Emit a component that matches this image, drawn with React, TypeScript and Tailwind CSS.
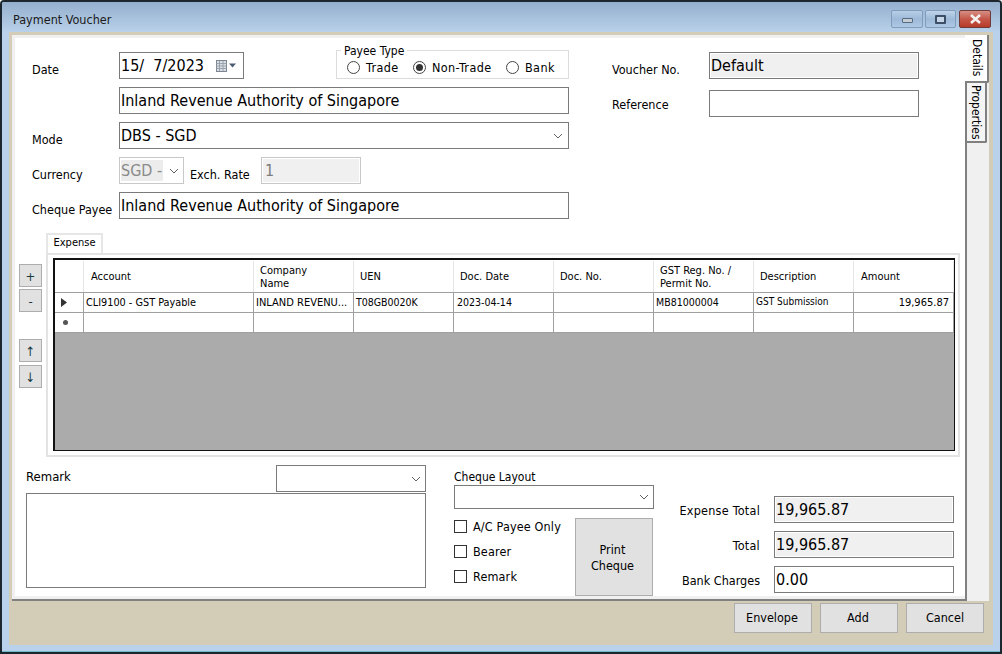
import React from "react";

const Chevron = () => (
  <svg width="10" height="6" viewBox="0 0 10 6" className="shrink-0">
    <path d="M1 1l4 4 4-4" fill="none" stroke="#606060" strokeWidth="1" />
  </svg>
);

const TextBox = ({ value = "", w, muted = false, grey = false }: { value?: string; w: string; muted?: boolean; grey?: boolean }) => (
  <div className={`${w} h-[27px] flex items-center pl-[1px] text-[16px] leading-none border border-[#7a7a7a] ${grey ? "bg-[#f0f0f0] shadow-[inset_0_0_0_1px_#fff]" : "bg-white"} ${muted ? "text-[#6d6d6d]" : "text-black"}`}>
    {value}
  </div>
);

const Radio = ({ label, w, on = false }: { label: string; w: string; on?: boolean }) => (
  <div className={`${w} flex items-center`}>
    <span className="w-[13px] h-[13px] rounded-full border border-[#444] bg-white flex items-center justify-center">
      {on && <span className="w-[7px] h-[7px] rounded-full bg-[#333]" />}
    </span>
    <span className="ml-[6px] pt-[2px] text-[12.500px] leading-none tracking-[0.4px] whitespace-nowrap">{label}</span>
  </div>
);

const Check = ({ label, mt }: { label: string; mt: string }) => (
  <div className={`${mt} flex items-center h-[13px]`}>
    <span className="w-[13px] h-[13px] border border-[#333] bg-white" />
    <span className="ml-[6px] pt-[2px] text-[12.500px] leading-none tracking-[0.15px]">{label}</span>
  </div>
);

const SideBtn = ({ t, mt }: { t: string; mt: string }) => (
  <div className={`${mt} w-[23px] h-[23px] pt-[1px] bg-[#e1e1e1] border border-[#adadad] flex items-center justify-center text-[13px] leading-none text-[#17383e]`}>{t}</div>
);

const FootBtn = ({ t, nudge }: { t: string; nudge: string }) => (
  <div className={`w-[78px] h-[30px] bg-[#e1e1e1] border border-[#adadad] flex items-center justify-center text-[12.500px] ${nudge}`}>{t}</div>
);

const headers: [string, string][] = [
  ["Account", "w-[170px] pl-[7px]"],
  ["Company\nName", "w-[100px] pl-[6px]"],
  ["UEN", "w-[100px] pl-[6px]"],
  ["Doc. Date", "w-[100px] pl-[6px]"],
  ["Doc. No.", "w-[100px] pl-[6px]"],
  ["GST Reg. No. /\nPermit No.", "w-[100px] pl-[6px]"],
  ["Description", "w-[100px] pl-[6px]"],
  ["Amount", "w-[100px] pl-[7px]"],
];

const cells: [string, string][] = [
  ["CLI9100 - GST Payable", "w-[170px] pl-[2px] pb-[1px] text-[10.800px]"],
  ["INLAND REVENU...", "w-[100px] pl-[2px] text-[11px]"],
  ["T08GB0020K", "w-[100px] pl-[2px] text-[10.500px]"],
  ["2023-04-14", "w-[100px] pl-[3px] text-[10.500px]"],
  ["", "w-[100px]"],
  ["MB81000004", "w-[100px] pl-[2px] text-[10.500px]"],
  ["GST Submission", "w-[100px] pl-[2px] pb-[2px] text-[10px]"],
  ["19,965.87", "w-[100px] pr-[4px] justify-end pb-[1px] text-[11px]"],
];

export default function App() {
  return (
    <div className="w-[1002px] h-[654px] flex flex-col border-2 border-[#1c262e] rounded-t-[4px] bg-[#b9d1ea] shadow-[inset_0_-1px_0_#6fb8c8] overflow-hidden text-black font-['DejaVu_Sans_Condensed','DejaVu_Sans',sans-serif] [font-stretch:condensed] text-[12.500px]">
      {/* title bar */}
      <div className="h-[30px] shrink-0 flex items-start justify-between pl-[11px] pr-[9px] bg-gradient-to-b from-[#94afcd] to-[#b9d1ea]">
        <span className="mt-[11px] text-[12.500px] leading-[14px] text-[#1a1a1a]">Payment Voucher</span>
        <div className="flex mt-[8px] gap-[2px]">
          <div className="w-[32px] h-[18px] rounded-[2px] border border-[#7f9cbc] bg-gradient-to-b from-[#b8cee6] via-[#9db9d8] to-[#aec8e4] flex items-center justify-center">
            <span className="w-[11px] h-[5px] mt-[3px] bg-[#c6ccd4] border border-[#566b82] rounded-[1px]" />
          </div>
          <div className="w-[31px] h-[18px] rounded-[2px] border border-[#7f9cbc] bg-gradient-to-b from-[#c0d4ea] via-[#9db9d8] to-[#aec8e4] flex items-center justify-center">
            <span className="w-[11px] h-[9px] bg-[#c6d6e8] border-2 border-[#3d4f66] rounded-[1px]" />
          </div>
          <div className="ml-[1px] w-[32px] h-[18px] rounded-[2px] border border-[#6e3a3a] bg-gradient-to-b from-[#d78f85] via-[#c4574a] to-[#b83a28] flex items-center justify-center">
            <svg width="13" height="10" viewBox="0 0 13 10">
              <path d="M2 1l9 8M11 1L2 9" stroke="#f4f0f0" strokeWidth="2.6" />
            </svg>
          </div>
        </div>
      </div>

      {/* client area */}
      <div className="w-[984px] h-[613px] ml-[7px] bg-[#d3cdb7] flex flex-col pl-[3px] pt-[3px] pr-[4px]">
        <div className="h-[566px] flex shrink-0">
          {/* main panel */}
          <div className="w-[953px] h-[566px] bg-white border-b-2 border-[#808080]">
            <div className="h-[564px] border-l-[3px] border-t-[3px] border-b-[3px] border-[#f0f0f0] flex flex-col">
              {/* top form */}
              <div className="h-[195px] flex pl-[17px] pt-[12px] shrink-0">
                <div className="w-[537px]">
                  <div className="flex h-[29px]">
                    <span className="w-[87px] pt-[12px] leading-[16px]">Date</span>
                    <div className="mt-[2px] w-[125px] h-[27px] border border-[#7a7a7a] flex items-center justify-between pl-[1px] pr-[5px] text-[16px] leading-none whitespace-pre">
                      <span>15/  7/2023</span>
                      <svg width="22" height="12" viewBox="0 0 22 12" className="shrink-0">
                        <rect x="0.5" y="0.5" width="10" height="11" fill="#d9dde2" stroke="#7d8794" />
                        <path d="M0 3.500h11M0 6h11M0 8.500h11M3.500 1v10M7 1v10" stroke="#8f99a5" strokeWidth="0.8" />
                        <path d="M13 3.500h7l-3.500 4z" fill="#4b5a70" />
                      </svg>
                    </div>
                    <div className="ml-[92px] relative w-[233px] h-[29px] border border-[#dcdcdc] flex items-center pt-[5px] pl-[10px]">
                      <span className="absolute left-[4px] -top-[7px] bg-white px-[3px] text-[12px] leading-[14px]">Payee Type</span>
                      <Radio label="Trade" w="w-[66px]" />
                      <Radio label="Non-Trade" w="w-[93px]" on />
                      <Radio label="Bank" w="w-[50px]" />
                    </div>
                  </div>
                  <div className="flex mt-[8px] ml-[87px]">
                    <TextBox w="w-[450px]" value="Inland Revenue Authority of Singapore" />
                  </div>
                  <div className="flex mt-[8px] h-[27px]">
                    <span className="w-[87px] pt-[10px] leading-[16px]">Mode</span>
                    <div className="w-[450px] h-[27px] border border-[#7a7a7a] flex items-center justify-between pl-[1px] pr-[5px] text-[16px] leading-none">
                      <span>DBS - SGD</span>
                      <Chevron />
                    </div>
                  </div>
                  <div className="flex mt-[8px] h-[27px]">
                    <span className="w-[87px] pt-[10px] leading-[16px]">Currency</span>
                    <div className="w-[65px] h-[27px] border border-[#c8c8c8] flex items-center justify-between pl-[1px] pr-[4px] text-[16px] leading-none text-[#8a8a8a]">
                      <span className="bg-[#ececec] h-[21px] flex items-center pr-[1px]">SGD -</span>
                      <Chevron />
                    </div>
                    <span className="ml-[6px] w-[71px] pt-[10px] leading-[16px]">Exch. Rate</span>
                    <div className="w-[100px] h-[27px] border border-[#c8c8c8] bg-[#f0f0f0] shadow-[inset_0_0_0_1px_#fff] flex items-center pl-[3px] text-[16px] leading-none text-[#7d7d7d]">1</div>
                  </div>
                  <div className="flex mt-[8px] h-[27px]">
                    <span className="w-[87px] pt-[10px] leading-[16px] whitespace-nowrap">Cheque Payee</span>
                    <TextBox w="w-[450px]" value="Inland Revenue Authority of Singapore" />
                  </div>
                </div>
                <div className="ml-[43px] pt-[2px]">
                  <div className="flex">
                    <span className="w-[97px] pt-[10px] leading-[16px]">Voucher No.</span>
                    <TextBox w="w-[210px]" value="Default" grey />
                  </div>
                  <div className="flex mt-[11px]">
                    <span className="w-[97px] pt-[7px] leading-[16px]">Reference</span>
                    <TextBox w="w-[210px]" />
                  </div>
                </div>
              </div>

              {/* grid section */}
              <div className="flex pl-[4px] shrink-0">
                <div className="w-[23px] pt-[31px]">
                  <SideBtn t="+" mt="" />
                  <SideBtn t="-" mt="mt-[2px]" />
                  <SideBtn t="↑" mt="mt-[27px]" />
                  <SideBtn t="↓" mt="mt-[3px]" />
                </div>
                <div className="ml-[4px] w-[914px]">
                  <div className="w-[57px] h-[21px] pb-[2px] border-2 border-b-0 border-[#e6e6e6] flex items-center justify-center text-[11px]">Expense</div>
                  <div className="w-[914px] h-[204px] -mt-px border-2 border-[#e3e3e3] pl-[5px] pt-[3px]">
                    <div className="w-[902px] h-[193px] border-t-2 border-l-2 border-r border-b border-[#111] bg-[#ababab] text-[11px] leading-[13px]">
                      <div className="flex h-[33px] pt-[1px] bg-white border-b border-[#a0a0a0]">
                        <div className="w-[29px] border-r border-[#e6e6e6]" />
                        {headers.map(([t, c]) => (
                          <div key={t} className={`${c} flex items-center whitespace-pre-line border-r border-[#e6e6e6]`}>{t}</div>
                        ))}
                      </div>
                      <div className="flex h-[20px] bg-white border-b border-[#a0a0a0]">
                        <div className="w-[29px] border-r border-[#a0a0a0] flex items-center pl-[6px]">
                          <svg width="6" height="9" viewBox="0 0 6 9"><path d="M0 0l6 4.500-6 4.500z" fill="#333" /></svg>
                        </div>
                        {cells.map(([t, c], i) => (
                          <div key={i} className={`${c} flex items-center whitespace-nowrap overflow-hidden border-r border-[#a0a0a0]`}>{t}</div>
                        ))}
                      </div>
                      <div className="flex h-[20px] bg-white border-b border-[#a0a0a0]">
                        <div className="w-[29px] border-r border-[#a0a0a0] flex items-center pl-[8px]">
                          <span className="w-[5px] h-[5px] rounded-full bg-[#555]" />
                        </div>
                        {cells.map(([, c], i) => (
                          <div key={i} className={`${c} border-r border-[#a0a0a0]`} />
                        ))}
                      </div>
                    </div>
                  </div>
                </div>
              </div>

              {/* bottom */}
              <div className="flex pl-[11px] pt-[8px]">
                <div className="w-[400px]">
                  <div className="flex justify-between h-[27px]">
                    <span className="pt-[4px] leading-[16px] text-[13px]">Remark</span>
                    <div className="w-[150px] h-[27px] border border-[#7a7a7a] flex items-center justify-end pr-[4px]"><Chevron /></div>
                  </div>
                  <div className="mt-[1px] w-[400px] h-[95px] border border-[#7a7a7a]" />
                </div>
                <div className="ml-[28px] w-[200px]">
                  <div className="h-[20px] pt-[4px] leading-[16px] text-[12px]">Cheque Layout</div>
                  <div className="h-[24px] border border-[#7a7a7a] flex items-center justify-end pr-[4px]"><Chevron /></div>
                  <div className="flex mt-[9px]">
                    <div className="w-[121px] pt-[2px]">
                      <Check label="A/C Payee Only" mt="" />
                      <Check label="Bearer" mt="mt-[12px]" />
                      <Check label="Remark" mt="mt-[12px]" />
                    </div>
                    <div className="w-[78px] h-[78px] pt-[2px] pr-[3px] bg-[#e1e1e1] border border-[#adadad] flex items-center justify-center text-center leading-[16px]">Print<br />Cheque</div>
                  </div>
                </div>
                <div className="ml-[26px] pt-[31px] w-[274px]">
                  {[
                    ["Expense Total", "19,965.87", true],
                    ["Total", "19,965.87", true],
                    ["Bank Charges", "0.00", false],
                  ].map(([l, v, g], i) => (
                    <div key={i} className={`flex items-center justify-end ${i ? "mt-[8px]" : ""}`}>
                      <span className={`mr-[14px] pt-[2px] leading-[16px] whitespace-nowrap ${g ? "tracking-[0.25px]" : ""}`}>{l as string}</span>
                      <TextBox w="w-[180px] shrink-0" value={v as string} grey={g as boolean} />
                    </div>
                  ))}
                </div>
              </div>
            </div>
          </div>

          {/* side tabs */}
          <div className="w-[24px] bg-[#f0f0f0] border-l-2 border-[#808080]">
            <div className="-ml-[2px] w-[24px] h-[48px] pl-[2px] bg-white border-r-2 border-b-2 border-[#808080] rounded-br-[2px] flex items-center justify-center text-[12px] leading-none [writing-mode:vertical-rl]">Details</div>
            <div className="w-[20px] h-[60px] pr-[1px] bg-[#f4f4f4] border-r-2 border-b-2 border-[#808080] rounded-br-[2px] flex items-center justify-center text-[12px] leading-none [writing-mode:vertical-rl]">Properties</div>
          </div>
        </div>

        {/* footer */}
        <div className="flex justify-end gap-[8px] pt-[2px] pr-[5px]">
          <FootBtn t="Envelope" nudge="pr-[2px]" />
          <FootBtn t="Add" nudge="pr-[2px]" />
          <FootBtn t="Cancel" nudge="" />
        </div>
      </div>
    </div>
  );
}
